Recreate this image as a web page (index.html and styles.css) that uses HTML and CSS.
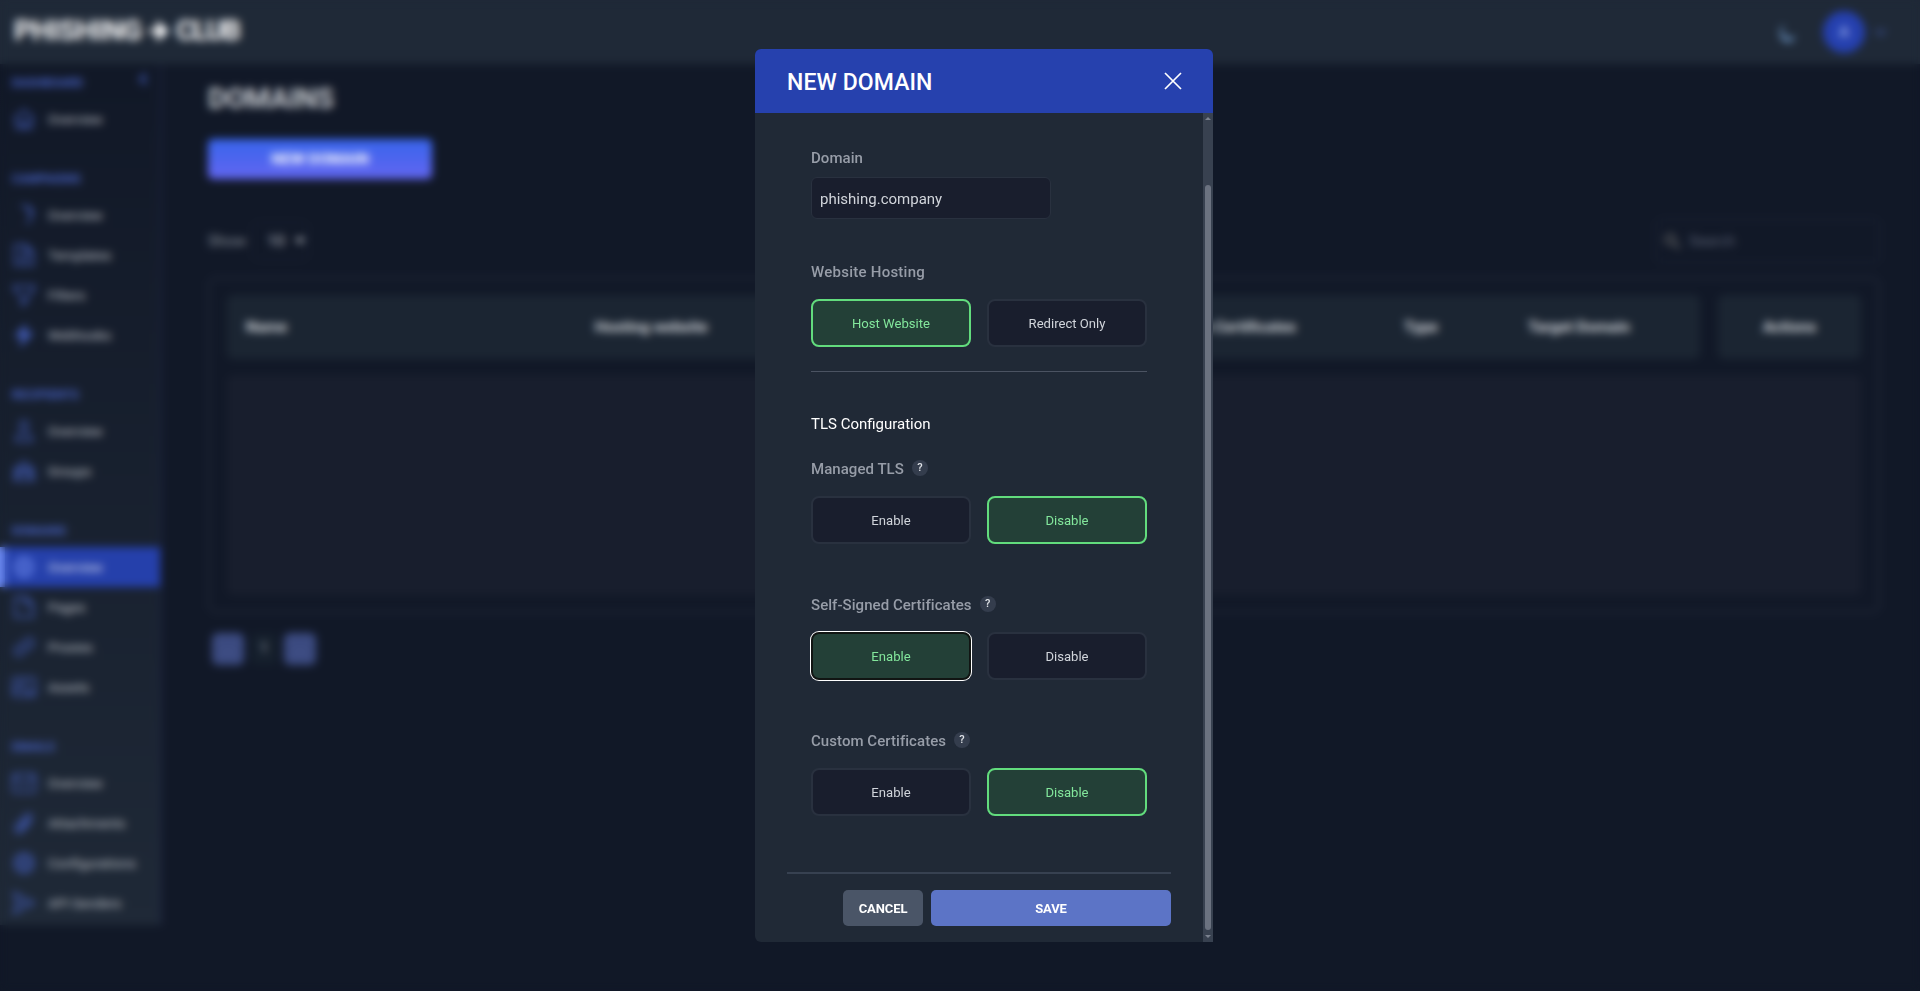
FILE: index.html
```html
<!DOCTYPE html>
<html lang="en">
<head>
    <meta charset="UTF-8">
    <meta name="viewport" content="width=device-width, initial-scale=1.0">
    <title>Domains - Phishing Club</title>
    <link rel="stylesheet" href="styles.css">
</head>
<body>
    <header class="topbar">
        <div class="logo">
            <span class="logo-first">PHISHING</span>
            <svg class="logo-arrow" viewBox="0 0 24 20"><path d="M1 10h18M11 3l8 7-8 7z" fill="#fff" stroke="#fff" stroke-width="4"/></svg>
            <span class="logo-last">CLUB</span>
        </div>
        <div class="topbar-right">
            <svg class="moon" viewBox="0 0 20 20"><path d="M4 1a9 9 0 0 0 14 13A10 10 0 0 1 8 19C1 16-1 8 4 1z" fill="#7fb0e8" stroke="#7fb0e8" stroke-width="2"/></svg>
            <div class="avatar">A</div>
            <svg class="chevron" viewBox="0 0 12 12"><path d="M1 3l5 5 5-5"/></svg>
        </div>
    </header>

    <div class="page">
        <nav class="sidebar">
            <svg class="collapse" viewBox="0 0 12 12"><path d="M9 1L4 6l5 5M6 1L2 6l4 5"/></svg>
            <div class="group">
                <h3>Dashboard</h3>
                <a class="item"><svg viewBox="0 0 24 24"><path d="M2 12l10-9 10 9M4.500 10v11h15V10M9.500 21v-6h5v6"/></svg>Overview</a>
            </div>
            <div class="group">
                <h3>Campaigns</h3>
                <a class="item"><svg viewBox="0 0 24 24"><path d="M9 3h6l5 4c1 5-1 8-5 14M15 3l4 9"/></svg>Overview</a>
                <a class="item"><svg viewBox="0 0 24 24"><path d="M3 2h11l7 7v13H3zM13 3v6h7M8 13h8M8 17h8"/></svg>Templates</a>
                <a class="item"><svg viewBox="0 0 24 24"><path d="M2 3h20v3l-7 8v5l-5 3v-8L2 6z"/></svg>Filters</a>
                <a class="item"><svg viewBox="0 0 24 24"><path d="M14 2L4 13h7l-2 9 11-12h-8z" class="solid"/></svg>Webhooks</a>
            </div>
            <div class="group">
                <h3>Recipients</h3>
                <a class="item"><svg viewBox="0 0 24 24"><circle cx="12" cy="6" r="4"/><path d="M4 22c0-11 16-11 16 0z"/></svg>Overview</a>
                <a class="item"><svg viewBox="0 0 24 24"><circle cx="12" cy="7" r="4"/><circle cx="5" cy="11" r="2.500"/><circle cx="19" cy="11" r="2.500"/><path d="M2 21v-4c2-3 4-3 5-1 1-5 9-5 10 0 1-2 3-2 5 1v4zM7 16v5M17 16v5"/></svg>Groups</a>
            </div>
            <div class="group">
                <h3>Domains</h3>
                <a class="item active"><svg viewBox="0 0 24 24"><circle cx="12" cy="12" r="9.500"/><path d="M2 12h20M12 2c-6 6-6 14 0 20M12 2c6 6 6 14 0 20M4 7h16M4 17h16"/></svg>Overview</a>
                <a class="item"><svg viewBox="0 0 24 24"><path d="M3 2h11l7 7v13H3zM13 3v6h7"/></svg>Pages</a>
                <a class="item"><svg viewBox="0 0 24 24"><path d="M10 14c-3-3 0-5 4-9 4-4 10 1 6 6l-3 3M14 10c3 3 0 5-4 9-4 4-10-1-6-6l3-3"/></svg>Proxies</a>
                <a class="item"><svg viewBox="0 0 24 24"><rect x="1" y="3" width="22" height="18" rx="2"/><path d="M2 17l6-6 6 7 3-3 5 4"/><path d="M5 8h12"/></svg>Assets</a>
            </div>
            <div class="group">
                <h3>Emails</h3>
                <a class="item"><svg viewBox="0 0 24 24"><rect x="1" y="3" width="22" height="18" rx="2"/><path d="M2 6l10 8 10-8"/></svg>Overview</a>
                <a class="item"><svg viewBox="0 0 24 24"><path d="M19 10l-9 10c-4 4-9-1-6-5L14 4c3-3 7 1 5 4l-9 10c-2 1-3 0-2-2l8-9"/></svg>Attachments</a>
                <a class="item"><svg viewBox="0 0 24 24"><circle cx="12" cy="12" r="9.500"/><circle cx="12" cy="12" r="4"/><path d="M12 2v5M12 17v5M2 12h5M17 12h5M5 5l4 4M15 15l4 4M19 5l-4 4M9 15l-4 4"/></svg>Configurations</a>
                <a class="item"><svg viewBox="0 0 24 24"><path d="M2 2l20 10L2 22l3-10zM5 12h9"/></svg>API Senders</a>
            </div>
        </nav>

        <main class="content">
            <h1>Domains</h1>
            <button class="btn-new">New Domain</button>
            <div class="toolbar">
                <div class="show">Show <span class="select">10 <i class="caret"></i></span></div>
                <div class="search">
                    <svg viewBox="0 0 16 16"><circle cx="6" cy="6" r="4.500"/><path d="M9.500 9.500L15 15"/></svg>
                    Search
                </div>
            </div>
            <div class="table">
                <div class="thead">
                    <div class="columns">
                        <span>Name</span>
                        <span>Hosting website</span>
                        <span class="col-certs">Custom Certificates</span>
                        <span>Type</span>
                        <span>Target Domain</span>
                    </div>
                    <div class="actions">Actions</div>
                </div>
                <div class="tbody"></div>
            </div>
            <div class="pager">
                <span class="page-btn">...</span>
                <span class="page-num">1</span>
                <span class="page-btn">...</span>
            </div>
        </main>
    </div>

    <div class="overlay">
        <div class="modal">
            <div class="modal-header">
                <h2>NEW DOMAIN</h2>
                <svg class="close" viewBox="0 0 18 18"><path d="M1 1l16 16M17 1L1 17"/></svg>
            </div>
            <div class="modal-main">
                <div class="modal-body">
                    <div class="form">
                        <div class="field">
                            <label>Domain</label>
                            <div class="input">phishing.company</div>
                        </div>
                        <div class="field hosting">
                            <label>Website Hosting</label>
                            <div class="options">
                                <button class="option selected">Host Website</button>
                                <button class="option">Redirect Only</button>
                            </div>
                        </div>
                        <h4>TLS Configuration</h4>
                        <div class="field">
                            <label>Managed TLS <span class="help">?</span></label>
                            <div class="options">
                                <button class="option">Enable</button>
                                <button class="option selected">Disable</button>
                            </div>
                        </div>
                        <div class="field">
                            <label>Self-Signed Certificates <span class="help">?</span></label>
                            <div class="options">
                                <button class="option selected focused">Enable</button>
                                <button class="option">Disable</button>
                            </div>
                        </div>
                        <div class="field">
                            <label>Custom Certificates <span class="help">?</span></label>
                            <div class="options">
                                <button class="option">Enable</button>
                                <button class="option selected">Disable</button>
                            </div>
                        </div>
                    </div>
                    <div class="modal-footer">
                        <button class="cancel">CANCEL</button>
                        <button class="save">SAVE</button>
                    </div>
                </div>
                <div class="scrollbar">
                    <i class="arrow-up"></i>
                    <div class="thumb"></div>
                    <i class="arrow-down"></i>
                </div>
            </div>
        </div>
    </div>
</body>
</html>
```
FILE: styles.css
```css
* {
    box-sizing: border-box;
}
body {
    margin: 0;
    height: 991px;
    overflow: hidden;
    background: #111827;
    color: #d1d5db;
    font-family: Roboto, "Liberation Sans", sans-serif;
    font-size: 15px;
}
h1, h2, h3, h4 {
    margin: 0;
}
button {
    font-family: inherit;
    padding: 0;
    border: none;
}
svg {
    fill: none;
}

/* top bar */
.topbar {
    display: flex;
    justify-content: space-between;
    align-items: center;
    height: 64px;
    padding: 0 34px 0 14px;
    background: #1f2937;
}
.logo {
    display: flex;
    align-items: center;
    padding-bottom: 3px;
    color: #fff;
    font-size: 28px;
    font-weight: 700;
}
.logo-first {
    width: 129px;
    letter-spacing: -0.3px;
}
.logo-last {
    letter-spacing: -1.5px;
}
.logo-arrow {
    width: 23px;
    height: 20px;
    margin: 0 5px;
}
.topbar-right {
    display: flex;
    align-items: center;
}
.moon {
    width: 16px;
    height: 17px;
    margin: 2px 27px 0 0;
}
.avatar {
    width: 42px;
    height: 42px;
    border-radius: 50%;
    background: #2540af;
    color: #a9bcf5;
    font-weight: 500;
    line-height: 42px;
    text-align: center;
}
.chevron {
    width: 11px;
    height: 11px;
    margin-left: 10px;
    stroke: #4058a8;
    stroke-width: 2;
}

.page {
    display: flex;
    align-items: flex-start;
}

/* sidebar */
.sidebar {
    position: relative;
    display: flex;
    flex-direction: column;
    gap: 24px;
    width: 162px;
    padding: 3px 0 2px;
    background: linear-gradient(#111827, #1f2937);
    border-right: 2px solid #1c2340;
}
.collapse {
    position: absolute;
    top: 9px;
    right: 10px;
    width: 12px;
    height: 12px;
    stroke: #4059b5;
    stroke-width: 1.500;
}
.group h3 {
    height: 32px;
    padding-left: 12px;
    color: #4660c0;
    font-size: 12px;
    font-weight: 700;
    line-height: 32px;
    text-transform: uppercase;
}
.item {
    display: flex;
    align-items: center;
    gap: 12px;
    height: 40px;
    padding-left: 12px;
    color: #c0c4cb;
    font-size: 13.500px;
}
.item svg {
    width: 24px;
    height: 24px;
    stroke: #4059b0;
    stroke-width: 2;
}
.item .solid {
    fill: #4059b0;
}
.item.active {
    width: 160px;
    padding-left: 7px;
    border-left: 5px solid #6d8bf0;
    background: #2540ab;
    color: #e1e6f5;
}
.item.active svg {
    stroke: #5a76dc;
}

/* page content */
.content {
    flex: 1;
    padding: 18px 40px 0 46px;
}
.content h1 {
    color: #d5d8dd;
    font-size: 28px;
    font-weight: 600;
    line-height: 34px;
    text-transform: uppercase;
}
.btn-new {
    display: block;
    width: 224px;
    height: 40px;
    margin-top: 23px;
    border-radius: 5px;
    background: linear-gradient(#3765ec, #6366f1);
    color: #fff;
    font-size: 15.500px;
    font-weight: 700;
    text-transform: uppercase;
}
.toolbar {
    display: flex;
    justify-content: space-between;
    align-items: center;
    height: 44px;
    margin-top: 40px;
}
.show {
    display: flex;
    align-items: center;
    gap: 6px;
    color: #8b919c;
    font-size: 15.500px;
}
.select {
    display: flex;
    align-items: center;
    gap: 10px;
    width: 56px;
    height: 38px;
    padding-left: 14px;
    border: 1px solid #1f2738;
    border-radius: 5px;
    color: #c0c4cb;
}
.caret {
    border: 5px solid transparent;
    border-top: 6px solid #c0c4cb;
    border-bottom: 0;
}
.search {
    display: flex;
    align-items: center;
    gap: 8px;
    width: 224px;
    height: 44px;
    padding-left: 7px;
    border: 1px solid #222a3c;
    border-radius: 6px;
    color: #596072;
}
.search svg {
    width: 17px;
    height: 17px;
    stroke: #686868;
    stroke-width: 2;
}
.table {
    display: flex;
    flex-direction: column;
    gap: 16px;
    height: 336px;
    margin-top: 14px;
    padding: 16px 17px;
    border: 2px solid #212839;
    border-radius: 8px;
}
.thead {
    display: flex;
    gap: 18px;
    height: 64px;
    color: #d5d8dd;
    font-size: 15.500px;
    font-weight: 700;
    line-height: 65px;
}
.columns {
    display: grid;
    grid-template-columns: 349px 450px 359px 124px 1fr;
    flex: 1;
    padding-left: 19px;
    border-radius: 6px;
    background: #1b2532;
}
.col-certs {
    width: 251px;
    text-align: right;
}
.actions {
    width: 143px;
    border-radius: 6px;
    background: #1b2532;
    text-align: center;
}
.tbody {
    flex: 1;
    border-radius: 6px;
    background: #181e2d;
}
.pager {
    display: flex;
    gap: 6px;
    margin: 20px 4px;
}
.pager span {
    width: 32px;
    height: 32px;
    border-radius: 6px;
    line-height: 30px;
    text-align: center;
}
.pager .page-btn {
    background: #3b4a80;
    color: #7482b8;
}
.pager .page-num {
    width: 28px;
    background: #151f2c;
    color: #a5aab3;
}

/* modal */
.overlay {
    position: fixed;
    inset: 0;
    display: flex;
    justify-content: center;
    align-items: flex-start;
    padding: 49px 0 0 48px;
    backdrop-filter: blur(4px);
}
.modal {
    width: 458px;
    height: 893px;
    border-radius: 6px 6px 0 6px;
    overflow: hidden;
    background: #202936;
}
.modal-header {
    display: flex;
    justify-content: space-between;
    align-items: center;
    height: 64px;
    padding: 0 31px 0 32px;
    background: #2641ae;
}
.modal-header h2 {
    color: #fff;
    font-size: 23px;
    font-weight: 500;
    line-height: 32px;
    padding-top: 3px;
    letter-spacing: 0.1px;
}
.close {
    width: 18px;
    height: 18px;
    stroke: #fff;
    stroke-width: 1.700;
}
.modal-main {
    display: flex;
    height: 829px;
}
.modal-body {
    flex: 1;
}
.form {
    width: 336px;
    margin: 32px 0 0 56px;
}
.field {
    margin-bottom: 48px;
}
.field label {
    display: flex;
    align-items: center;
    height: 24px;
    margin-bottom: 16px;
    padding-top: 1px;
    color: #979da8;
    font-size: 15px;
    font-weight: 500;
    letter-spacing: 0.05px;
}
.input {
    width: 240px;
    height: 42px;
    margin-top: -8px;
    padding-left: 8px;
    border: 1px solid #29313f;
    border-radius: 6px;
    background: #191e2d;
    line-height: 42px;
}
.field:first-child {
    margin-bottom: 40px;
}
.hosting {
    margin-bottom: 40px;
    padding-bottom: 24px;
    border-bottom: 1px solid #4b5362;
}
.hosting label {
    letter-spacing: 0.25px;
}
.form h4 {
    margin-bottom: 20px;
    color: #fff;
    font-size: 15px;
    font-weight: 400;
    line-height: 25px;
    height: 24px;
}
.help {
    width: 16px;
    height: 16px;
    margin: -1px 0 0 8px;
    border-radius: 50%;
    background: #343d4d;
    color: #e0e3e8;
    font-size: 11px;
    line-height: 16px;
    text-align: center;
}
.options {
    display: flex;
    gap: 16px;
}
.option {
    width: 160px;
    height: 48px;
    border: 2px solid #29313f;
    border-radius: 8px;
    background: #191e2d;
    color: #d1d5db;
    font-size: 13.100px;
}
.option.selected {
    border-color: #62dc7d;
    background: #234037;
    color: #83e79c;
}
.option.focused {
    border-color: #111513;
    box-shadow: 0 0 0 1px #fff;
}
.modal-footer {
    display: flex;
    justify-content: flex-end;
    gap: 8px;
    width: 384px;
    margin: 56px 0 0 32px;
    padding-top: 16px;
    border-top: 2px solid #374151;
}
.modal-footer button {
    height: 36px;
    border-radius: 5px;
    color: #fff;
    font-size: 13px;
    font-weight: 700;
    letter-spacing: -0.1px;
}
.modal-footer .cancel {
    width: 80px;
    background: #4a5567;
}
.modal-footer .save {
    width: 240px;
    background: #5c74c6;
}
.scrollbar {
    display: flex;
    flex-direction: column;
    align-items: center;
    width: 10px;
    padding: 4px 0;
    background: #384150;
}
.thumb {
    width: 6px;
    height: 745px;
    margin: auto 0 5px;
    border-radius: 3px;
    background: #6b7280;
}
.arrow-up, .arrow-down {
    border: 3px solid transparent;
}
.arrow-up {
    border-top: 0;
    border-bottom-color: #7b828f;
}
.arrow-down {
    border-bottom: 0;
    border-top-color: #7b828f;
}
```
